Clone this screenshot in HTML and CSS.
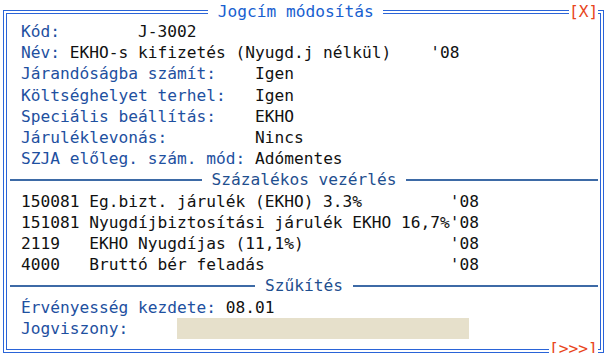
FILE: index.html
```html
<!DOCTYPE html>
<html lang="hu">
<head>
  <meta charset="UTF-8">
  <title>Jogcím módosítás</title>
  <link rel="stylesheet" href="styles.css">
</head>
<body>
  <div class="window">
    <div class="title">Jogcím módosítás</div>
    <div class="close">[X]</div>
    <div class="more">[&gt;&gt;&gt;]</div>

    <div class="frame">
      <!-- header data -->
      <div class="row"><span class="lbl">Kód:        </span>J-3002</div>
      <div class="row"><span class="lbl">Név: </span>EKHO-s kifizetés (Nyugd.j nélkül)    '08</div>
      <div class="row"><span class="lbl">Járandóságba számít:    </span>Igen</div>
      <div class="row"><span class="lbl">Költséghelyet terhel:   </span>Igen</div>
      <div class="row"><span class="lbl">Speciális beállítás:    </span>EKHO</div>
      <div class="row"><span class="lbl">Járuléklevonás:         </span>Nincs</div>
      <div class="row"><span class="lbl">SZJA előleg. szám. mód: </span>Adómentes</div>

      <!-- percentage rules -->
      <div class="sep"><div class="line"></div><span>Százalékos vezérlés</span><div class="line"></div></div>
      <div class="row">150081 Eg.bizt. járulék (EKHO) 3.3%         '08</div>
      <div class="row">151081 Nyugdíjbiztosítási járulék EKHO 16,7%'08</div>
      <div class="row">2119   EKHO Nyugdíjas (11,1%)               '08</div>
      <div class="row">4000   Bruttó bér feladás                   '08</div>

      <!-- filter -->
      <div class="sep"><div class="line"></div><span>Szűkítés</span><div class="line"></div></div>
      <div class="row"><span class="lbl">Érvényesség kezdete: </span>08.01</div>
      <div class="row"><span class="lbl">Jogviszony:     </span><span class="field"></span></div>
    </div>
  </div>
</body>
</html>
```

FILE: styles.css
```css
body {
  margin: 0;
  background-color: #fff;
  font-family: "DejaVu Sans Mono", monospace;
  font-size: 16.2px;
  line-height: 21.2px;
  color: #111;
}

.window {
  position: relative;
  margin: 10px 0 0 3px;
  width: 601px;
  height: 343px;
  padding: 2px;
  border: 1px solid #2a64d8;
  box-sizing: border-box;
}

.frame {
  height: 100%;
  padding-top: 7.1px;
  border: 1px solid #2a64d8;
  box-sizing: border-box;
}

.title, .close, .more {
  position: absolute;
  background-color: #fff;
  white-space: pre;
}

.title {
  top: -10px;
  left: 204px;
  padding: 0 1ch;
  color: #1860d0;
}

.close {
  top: -10px;
  left: 565px;
  color: #e8461c;
}

.more {
  top: 327px;
  left: 545px;
  color: #e8461c;
}

.row {
  height: 21.2px;
  padding-left: 14px;
  white-space: pre;
}

.lbl {
  color: #1e50a0;
}

.field {
  display: inline-block;
  width: 30ch;
  height: 21.2px;
  vertical-align: top;
  background-color: #e6e0cb;
}

.sep {
  display: flex;
  align-items: center;
  height: 21.2px;
  padding: 0 2px 0 3px;
  color: #1f4f8f;
}

.sep span {
  padding: 0 1ch;
}

.sep .line {
  flex: 1;
  height: 2px;
  background-color: #3d6aa6;
}
```
